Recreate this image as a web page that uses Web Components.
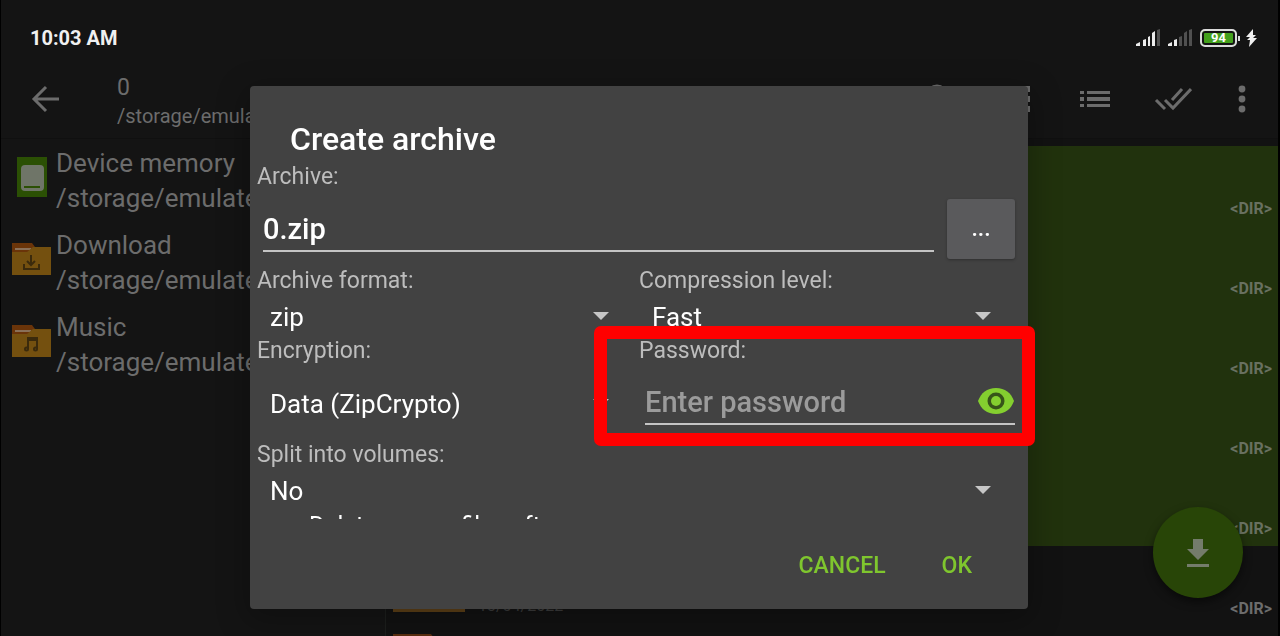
<!DOCTYPE html>
<html lang="en">
<head>
<meta charset="utf-8">
<meta name="viewport" content="width=device-width, initial-scale=1">
<title>Create archive</title>
<style>
html,body{margin:0;height:100%;background:#000;overflow:hidden}
body{font-family:Roboto,"Liberation Sans",sans-serif;color:#6c6c6c}
</style>
</head>
<body>
<archiver-app></archiver-app>
<script>
const define=(name,css,html)=>customElements.define(name,class extends HTMLElement{
  constructor(){
    super();
    const t=document.createElement('template');
    t.innerHTML=`<style>*{box-sizing:border-box}${css}</style>`+(typeof html==='function'?html(this):html);
    this.attachShadow({mode:'open'}).append(t.content.cloneNode(true));
  }
});

define('status-bar',`
:host{display:flex;align-items:center;justify-content:space-between;height:76px;padding:0 21px 0 29px;color:#f0f0f0}
time{font-size:20px;font-weight:700;line-height:24px}
.r{display:flex;align-items:center;gap:8px}
.b{display:flex;align-items:center;gap:1px}
.cell{display:grid;place-items:center;width:37px;height:18px;border:2px solid #dcdcdc;border-radius:5px;
 background:#43a01c;box-shadow:inset 0 0 0 2px #141414;color:#fff;font-size:13px;font-weight:700;line-height:14px}
.nub{width:2px;height:5px;background:#dcdcdc}
svg{display:block}
.bolt{margin-left:5px}`,`
<time>10:03 AM</time>
<div class="r">
<svg width="24" height="18" viewBox="0 0 24 18" fill="#ececec"><path d="M0 17v-2l4-2v4z"/><path d="M7 11l3-1v7H7zM12 8l2-1v10h-2zM16 4l3-2v15h-3z"/><path fill="#505050" d="M21 1l3-1v17h-3z"/></svg>
<svg width="24" height="18" viewBox="0 0 24 18" fill="#ececec"><path d="M0 17v-2l4-2v4z"/><path d="M6 11l3-1v7H6z"/><path fill="#505050" d="M11 8l3-1v10h-3zM16 4l3-2v15h-3zM21 1l3-1v17h-3z"/></svg>
<div class="b"><span class="cell">94</span><span class="nub"></span>
<svg class="bolt" width="11" height="18" viewBox="0 0 11 18" fill="#f0f0f0"><path d="M7 0L0 8h4l-3 3h3l-1 7 8-9H7l3-3H7z"/></svg></div>
</div>`);

define('app-toolbar',`
:host{display:flex;align-items:center;height:63px;padding:0 32px 17px 30px;border-bottom:1px solid #101010}
button{display:block;border:0;padding:0;background:none;color:inherit}
svg{display:block}
.t{flex:1;min-width:0;padding:6px 0 0 57px}
.n{font-size:23px;line-height:28px}
.p{font-size:20px;line-height:28px;white-space:nowrap}
nav{display:flex;align-items:center;gap:43px}
.list{margin-left:5px}
.last{margin-left:3px}`,`
<button aria-label="Back"><svg width="29" height="30" viewBox="0 0 29 30" fill="none" stroke="currentColor" stroke-width="3"><path d="M28 15H4M15 3L3 15l12 12"/></svg></button>
<div class="t"><div class="n">0</div><div class="p">/storage/emulated</div></div>
<nav>
<button aria-label="Search"><svg width="32" height="30" viewBox="0 0 32 30" fill="none" stroke="currentColor" stroke-width="3"><circle cx="13" cy="11" r="9"/><path d="M20 18l9 9"/></svg></button>
<button aria-label="Grid view"><svg width="32" height="30" viewBox="0 0 32 30" fill="currentColor"><path d="M5 2h7v6H5zM15 2h6v6h-6zM24 2h7v6h-7zM5 12h7v6H5zM15 12h6v6h-6zM24 12h7v6h-7zM5 22h7v6H5zM15 22h6v6h-6zM24 22h7v6h-7z"/></svg></button>
<button aria-label="List view" class="list"><svg width="32" height="30" viewBox="0 0 32 30" fill="currentColor"><path d="M1 7h4v3H1zM8 7h23v3H8zM1 13h4v4H1zM8 13h23v4H8zM1 20h4v3H1zM8 20h23v3H8z"/></svg></button>
<button aria-label="Select all"><svg width="38" height="30" viewBox="0 0 38 30" fill="none" stroke="currentColor" stroke-width="3"><path d="M2 16l9 9M11 16l8 8L37 5M18 16L28 5"/></svg></button>
<button aria-label="More" class="last"><svg width="8" height="30" viewBox="0 0 8 30" fill="currentColor"><circle cx="4" cy="5" r="3.4"/><circle cx="4" cy="15" r="3.4"/><circle cx="4" cy="25" r="3.4"/></svg></button>
</nav>`);

const folder=g=>`<svg width="40" height="34" viewBox="0 0 40 34"><path fill="#6a3409" d="M0 1h20l3 4v8H0z"/><path fill="#8a7058" d="M3 6h16v2H3z"/><path fill="#74500f" d="M0 10h15l6-5h18v28H0z"/><g fill="none" stroke="#3b2a0c" stroke-width="2">${g}</g></svg>`;
const glyphs={
 device:`<svg width="30" height="40" viewBox="0 0 30 40"><path fill="#2b5004" d="M0 0h30v40H0z"/><rect x="4" y="8" width="23" height="26" rx="4" fill="#6f7568"/><path fill="#2b5004" d="M7 29h16v2H7z"/></svg>`,
 download:folder('<path d="M19 13v9M15 19l4 4 4-4M12 22v5h15v-5"/>'),
 music:folder('<path d="M16 25V14h9v11M16 16h9"/><circle cx="14.500" cy="25" r="1.500"/><circle cx="23.500" cy="25" r="1.500"/>')
};
define('side-item',`
:host{display:flex}
.i{display:grid;justify-items:center;align-content:center;width:40px;height:62px;margin-right:4px}
.x{font-size:26px;line-height:35px;white-space:nowrap}`,
h=>`<span class="i">${glyphs[h.getAttribute('icon')]}</span><div class="x"><slot></slot></div>`);

define('file-row',`
:host{display:flex;height:80px;padding:8px 6px 0 7px;font-size:16px}
:host([selected]){background:#21320d;color:#687060}
svg{flex:none;display:block}
.d{flex:1;padding:43px 0 0 13px;line-height:18px;color:#3c3c3c}
b{padding-top:46px;line-height:18px}`,`
<svg width="72" height="58" viewBox="0 0 72 58"><path fill="#5a2e10" d="M1 0h37l6 8H0V0z"/><path fill="#5e4017" d="M0 16h26l12-8h34v50H0z"/></svg>
<span class="d"><slot></slot></span><b>&lt;DIR&gt;</b>`);

define('select-field',`
:host{display:block;min-width:0}
label{display:block;font-size:23px;line-height:26px;color:#bdbdbd}
.s{display:grid;align-items:center;height:44px}
:host([tall]) .s{height:78px}
select,svg{grid-area:1/1}
select{appearance:none;width:100%;height:100%;margin:0;padding:2px 56px 0 13px;border:0;outline:0;background:none;color:#fff;font:26px/30px Roboto,sans-serif}
svg{justify-self:end;margin-right:30px;pointer-events:none}`,
h=>`<label for="c">${h.getAttribute('label')}</label><div class="s"><select id="c"><option>${h.getAttribute('value')}</option></select><svg width="16" height="8" viewBox="0 0 16 8"><path fill="#c6c6c6" d="M0 0h16L8 8z"/></svg></div>`);

define('text-field',`
:host{display:block;position:relative;min-width:0}
label{display:block;font-size:23px;line-height:26px;color:#bdbdbd}
.s{display:flex;align-items:center;gap:13px;height:78px;padding:0 6px}
.w{flex:1;display:flex;align-items:center;min-width:0;height:46px;border-bottom:2px solid #c4c4c4}
:host([marked]) .s{padding-bottom:2px}
input{flex:1;min-width:0;margin:0;padding:2px 0 0;border:0;outline:0;background:none;color:#fff;font:500 29px/34px Roboto,sans-serif}
input::placeholder{color:#9b9b9b;opacity:1}
::slotted(*){flex:none}
.m{display:none}
:host([marked]) .m{display:block;position:absolute;inset:-12px -14px -4px -45px;border:13px solid red;border-radius:7px;pointer-events:none}`,
h=>`<label for="c">${h.getAttribute('label')}</label><div class="s"><span class="w"><input id="c" type="${h.getAttribute('type')||'text'}" value="${h.getAttribute('value')||''}" placeholder="${h.getAttribute('placeholder')||''}"><slot name="inside"></slot></span><slot></slot></div><span class="m"></span>`);

define('archive-dialog',`
:host{display:flex;flex-direction:column;min-width:0;min-height:0;background:#424242;border-radius:4px;box-shadow:0 8px 30px 4px rgba(0,0,0,.25)}
h1{margin:0;padding:32px 40px 3px;font-size:32px;font-weight:500;line-height:43px;color:#fff}
form{flex:1;min-height:0;margin:0;padding:0 7px;overflow-x:visible;overflow-y:clip}
.g{display:grid;grid-template-columns:1fr 1fr}
button{border:0;padding:0;background:none;font:500 23px/28px Roboto,sans-serif;color:#7fc62e}
.more{width:68px;height:60px;border-radius:3px;background:#5a5a5c;box-shadow:0 1px 3px rgba(0,0,0,.3);color:#fff;font-size:23px}
.check{display:flex;gap:12px;color:#fff;font-size:24px;line-height:26px}
.check input{appearance:none;width:40px;height:26px;margin:0}
footer{display:flex;align-items:center;justify-content:flex-end;gap:56px;height:90px;padding:4px 56px 0 0}
svg{display:block}`,`
<h1>Create archive</h1>
<form>
<text-field label="Archive:" value="0.zip"><button type="button" class="more">...</button></text-field>
<div class="g">
<select-field label="Archive format:" value="zip"></select-field>
<select-field label="Compression level:" value="Fast"></select-field>
<select-field tall label="Encryption:" value="Data (ZipCrypto)"></select-field>
<text-field marked label="Password:" type="password" placeholder="Enter password"><button type="button" slot="inside" aria-label="Show password"><svg width="38" height="26" viewBox="0 0 38 26"><path fill="#84cf2f" d="M19 0C10 0 4 5 1 13c3 8 9 13 18 13s15-5 18-13C34 5 28 0 19 0z"/><circle cx="19" cy="13" r="8.500" fill="#375419"/><circle cx="19" cy="13" r="5" fill="#84cf2f"/></svg></button></text-field>
</div>
<select-field label="Split into volumes:" value="No"></select-field>
<label class="check"><input type="checkbox">Delete source files after</label>
</form>
<footer><button type="button">CANCEL</button><button type="button">OK</button></footer>`);

define('archiver-app',`
:host{display:grid;grid-template-rows:auto auto minmax(0,1fr);height:100vh;margin:0 2px 0 1px;background:#141414;overflow:hidden}
.main{display:grid;grid-template-columns:385fr 892fr;min-height:0;background:#121212}
aside{display:flex;flex-direction:column;gap:12px;padding:7px 0 0 11px;overflow:hidden;background:#141414;border-right:1px solid #1d1f1d}
section{padding-top:7px;overflow:hidden}
.fab{position:fixed;right:37px;bottom:38px;display:grid;place-items:center;width:90px;height:91px;padding:0;border:0;border-radius:50%;background:#284507;color:#747c6b;box-shadow:0 4px 9px rgba(0,0,0,.5)}
.over{position:fixed;inset:0;display:grid;grid-template-columns:250fr 778fr 252fr;padding:86px 0 27px}
archive-dialog{grid-column:2}`,`
<status-bar></status-bar>
<app-toolbar></app-toolbar>
<div class="main">
<aside>
<side-item icon="device">Device memory<br>/storage/emulated</side-item>
<side-item icon="download">Download<br>/storage/emulated</side-item>
<side-item icon="music">Music<br>/storage/emulated</side-item>
</aside>
<section>
<file-row selected></file-row><file-row selected></file-row><file-row selected></file-row><file-row selected></file-row><file-row selected></file-row>
<file-row>13/04/2022</file-row><file-row></file-row>
</section>
</div>
<button class="fab" aria-label="Extract"><svg width="24" height="30" viewBox="0 0 24 30" fill="currentColor"><path d="M7 1h10v10h6L12 22 1 11h6zM1 26h22v3H1z"/></svg></button>
<div class="over"><archive-dialog role="dialog" aria-label="Create archive"></archive-dialog></div>`);
</script>
</body>
</html>
